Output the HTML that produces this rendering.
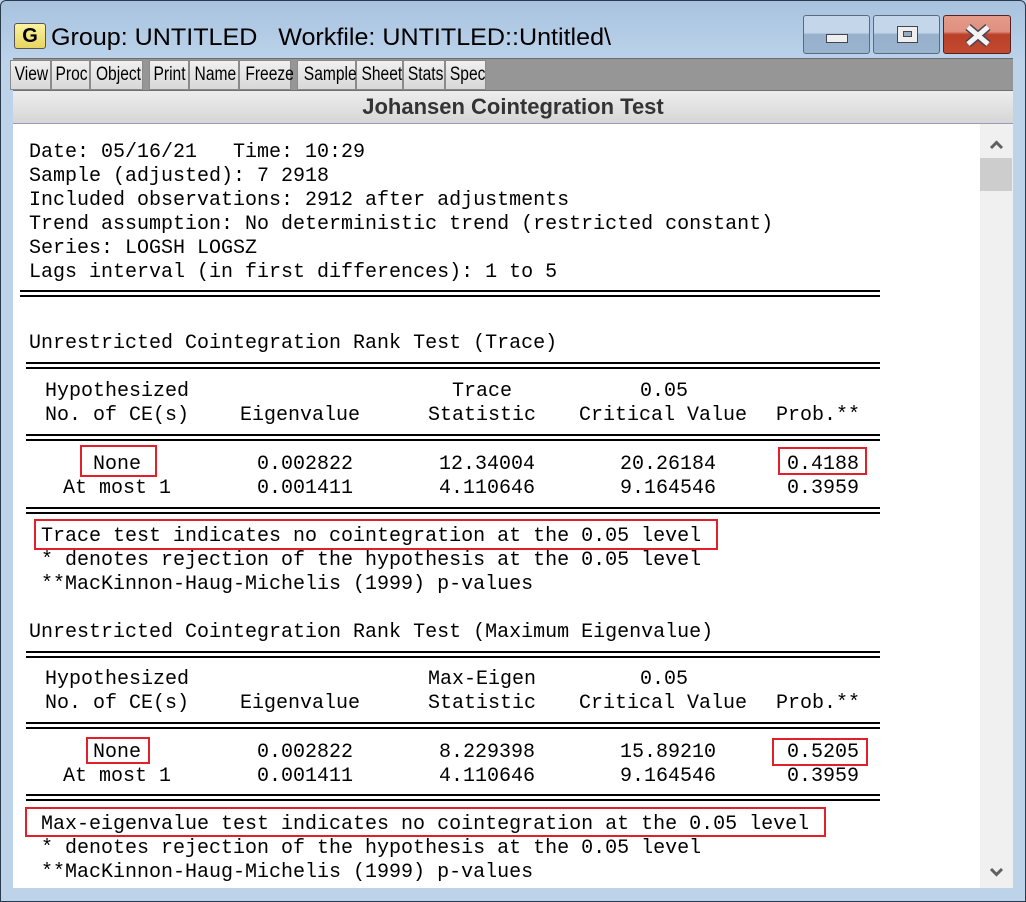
<!DOCTYPE html>
<html><head><meta charset="utf-8"><style>
*{margin:0;padding:0;box-sizing:border-box}
body{width:1026px;height:902px;overflow:hidden;background:#bcd2ea;position:relative;font-family:"Liberation Sans",sans-serif}
.frame{position:absolute;left:0;top:0;width:1026px;height:902px;border:1px solid #2a3a4a;border-radius:6px 6px 0 0;background:linear-gradient(#a8c2df 0,#bcd3ea 60px,#bcd3ea 100%)}
.tb{position:absolute;left:13px;top:58px;width:1000px;height:32px;background:#969696;border-top:1px solid #6c6c6c}
.btn{position:absolute;top:1px;height:30px;background:linear-gradient(#f0f0f0,#d8d8d8);border:1px solid #8a8a8a;font-size:19px;line-height:28px;text-align:center;color:#000;white-space:nowrap;overflow:visible}
.btn span{display:inline-block;transform:scaleX(0.82);transform-origin:center}
.hdr{position:absolute;left:13px;top:90px;width:1000px;height:34px;background:linear-gradient(#ededed,#d6d6d6);border-top:1px solid #707070;border-bottom:1px solid #9a9ab8;text-align:center;font-weight:bold;font-size:22px;line-height:32px;color:#333}
.content{position:absolute;left:13px;top:124px;width:967px;height:764px;background:#fff}
.sb{position:absolute;left:980px;top:124px;width:33px;height:764px;background:#f0f0f0}
.t{position:absolute;font-family:"Liberation Mono",monospace;font-size:20px;line-height:24px;white-space:pre;color:#000;margin-top:2px}
.dl{position:absolute;height:7px;border-top:2px solid #000;border-bottom:2px solid #000}
.rb{position:absolute;border:2px solid #e3202a}
.wb{position:absolute;top:15px;height:39px;border:1px solid #5a6a80;border-radius:3px;background:linear-gradient(#c4d6ea 0,#c4d6ea 45%,#97b0cc 50%,#9ab3cf 100%)}
</style></head><body>
<div class="frame"></div>
<div style="position:absolute;left:14px;top:23px;width:32px;height:26px;background:linear-gradient(#fbf3a0,#e7d560);border:1px solid #555;border-radius:3px;font-weight:bold;font-size:20px;line-height:24px;text-align:center">G</div>
<svg style="position:absolute;left:0;top:0" width="700" height="58"><text x="51" y="45" font-family="Liberation Sans" font-size="24" textLength="560" lengthAdjust="spacingAndGlyphs" fill="#000" style="white-space:pre" xml:space="preserve">Group: UNTITLED&#160;&#160;&#160;Workfile: UNTITLED::Untitled\</text></svg>
<div class="wb" style="left:803px;width:67px"><div style="position:absolute;left:22px;top:18px;width:22px;height:9px;background:#eee;border:1px solid #445"></div></div>
<div class="wb" style="left:873px;width:67px"><div style="position:absolute;left:23px;top:10px;width:21px;height:17px;background:#eee;border:1px solid #445"><div style="margin:4px 5px;height:6px;border:1px solid #445;background:#9ab"></div></div></div>
<div class="wb" style="left:943px;width:68px;border-color:#5a2020;background:linear-gradient(#e49a8a 0,#e09080 42%,#bb4028 50%,#c04a30 100%)">
<svg width="68" height="39" style="position:absolute;left:0;top:0"><path d="M24 11 L44 28 M44 11 L24 28" stroke="#445" stroke-width="8"/><path d="M24 11 L44 28 M44 11 L24 28" stroke="#f4f4f4" stroke-width="5"/></svg></div>
<div class="tb">
<div class="btn" style="left:-3px;width:41px"><span>View</span></div>
<div class="btn" style="left:38px;width:39px"><span>Proc</span></div>
<div class="btn" style="left:77px;width:53px"><span>Object</span></div>
<div class="btn" style="left:136px;width:40px"><span>Print</span></div>
<div class="btn" style="left:176px;width:50px"><span>Name</span></div>
<div class="btn" style="left:226px;width:52px"><span>Freeze</span></div>
<div class="btn" style="left:284px;width:59px"><span>Sample</span></div>
<div class="btn" style="left:343px;width:47px"><span>Sheet</span></div>
<div class="btn" style="left:390px;width:42px"><span>Stats</span></div>
<div class="btn" style="left:432px;width:41px"><span>Spec</span></div>
</div>
<div class="hdr">Johansen Cointegration Test</div>
<div class="content"></div>
<div class="sb"><div style="position:absolute;left:0;top:34px;width:32px;height:33px;background:#cdcdcd"></div>
<svg width="33" height="764"><path d="M11 24 L16.5 18.5 L22 24" stroke="#606060" stroke-width="3" fill="none"/><path d="M11 745 L16.5 750.5 L22 745" stroke="#606060" stroke-width="3" fill="none"/></svg></div>

<div class="t" style="left:29px;top:139px">Date: 05/16/21   Time: 10:29
Sample (adjusted): 7 2918
Included observations: 2912 after adjustments
Trend assumption: No deterministic trend (restricted constant)
Series: LOGSH LOGSZ
Lags interval (in first differences): 1 to 5</div>
<div class="dl" style="left:20px;top:290px;width:860px"></div>
<div class="t" style="left:29px;top:330px">Unrestricted Cointegration Rank Test (Trace)</div>
<div class="dl" style="left:26px;top:362px;width:854px"></div>
<div class="t" style="left:45px;top:378px">Hypothesized</div><div class="t" style="left:452px;top:378px">Trace</div><div class="t" style="left:640px;top:378px">0.05</div>
<div class="t" style="left:45px;top:402px">No. of CE(s)</div><div class="t" style="left:240px;top:402px">Eigenvalue</div><div class="t" style="left:428px;top:402px">Statistic</div><div class="t" style="left:579px;top:402px">Critical Value</div><div class="t" style="left:776px;top:402px">Prob.**</div>
<div class="dl" style="left:26px;top:434px;width:854px"></div>
<div class="t" style="left:93px;top:451px">None</div><div class="t" style="left:257px;top:451px">0.002822</div><div class="t" style="left:439px;top:451px">12.34004</div><div class="t" style="left:620px;top:451px">20.26184</div><div class="t" style="left:787px;top:451px">0.4188</div>
<div class="t" style="left:63px;top:475px">At most 1</div><div class="t" style="left:257px;top:475px">0.001411</div><div class="t" style="left:439px;top:475px">4.110646</div><div class="t" style="left:620px;top:475px">9.164546</div><div class="t" style="left:787px;top:475px">0.3959</div>
<div class="dl" style="left:26px;top:507px;width:854px"></div>
<div class="t" style="left:41px;top:523px">Trace test indicates no cointegration at the 0.05 level
* denotes rejection of the hypothesis at the 0.05 level
**MacKinnon-Haug-Michelis (1999) p-values</div>
<div class="t" style="left:29px;top:619px">Unrestricted Cointegration Rank Test (Maximum Eigenvalue)</div>
<div class="dl" style="left:26px;top:651px;width:854px"></div>
<div class="t" style="left:45px;top:666px">Hypothesized</div><div class="t" style="left:428px;top:666px">Max-Eigen</div><div class="t" style="left:640px;top:666px">0.05</div>
<div class="t" style="left:45px;top:690px">No. of CE(s)</div><div class="t" style="left:240px;top:690px">Eigenvalue</div><div class="t" style="left:428px;top:690px">Statistic</div><div class="t" style="left:579px;top:690px">Critical Value</div><div class="t" style="left:776px;top:690px">Prob.**</div>
<div class="dl" style="left:26px;top:722px;width:854px"></div>
<div class="t" style="left:93px;top:739px">None</div><div class="t" style="left:257px;top:739px">0.002822</div><div class="t" style="left:439px;top:739px">8.229398</div><div class="t" style="left:620px;top:739px">15.89210</div><div class="t" style="left:787px;top:739px">0.5205</div>
<div class="t" style="left:63px;top:763px">At most 1</div><div class="t" style="left:257px;top:763px">0.001411</div><div class="t" style="left:439px;top:763px">4.110646</div><div class="t" style="left:620px;top:763px">9.164546</div><div class="t" style="left:787px;top:763px">0.3959</div>
<div class="dl" style="left:26px;top:794px;width:854px"></div>
<div class="t" style="left:41px;top:811px">Max-eigenvalue test indicates no cointegration at the 0.05 level
* denotes rejection of the hypothesis at the 0.05 level
**MacKinnon-Haug-Michelis (1999) p-values</div>

<div class="rb" style="left:80px;top:445px;width:77px;height:32px"></div>
<div class="rb" style="left:778px;top:447px;width:89px;height:28px"></div>
<div class="rb" style="left:34px;top:519px;width:684px;height:31px"></div>
<div class="rb" style="left:86px;top:737px;width:64px;height:27px"></div>
<div class="rb" style="left:772px;top:738px;width:96px;height:28px"></div>
<div class="rb" style="left:25px;top:807px;width:801px;height:30px"></div>
</body></html>
